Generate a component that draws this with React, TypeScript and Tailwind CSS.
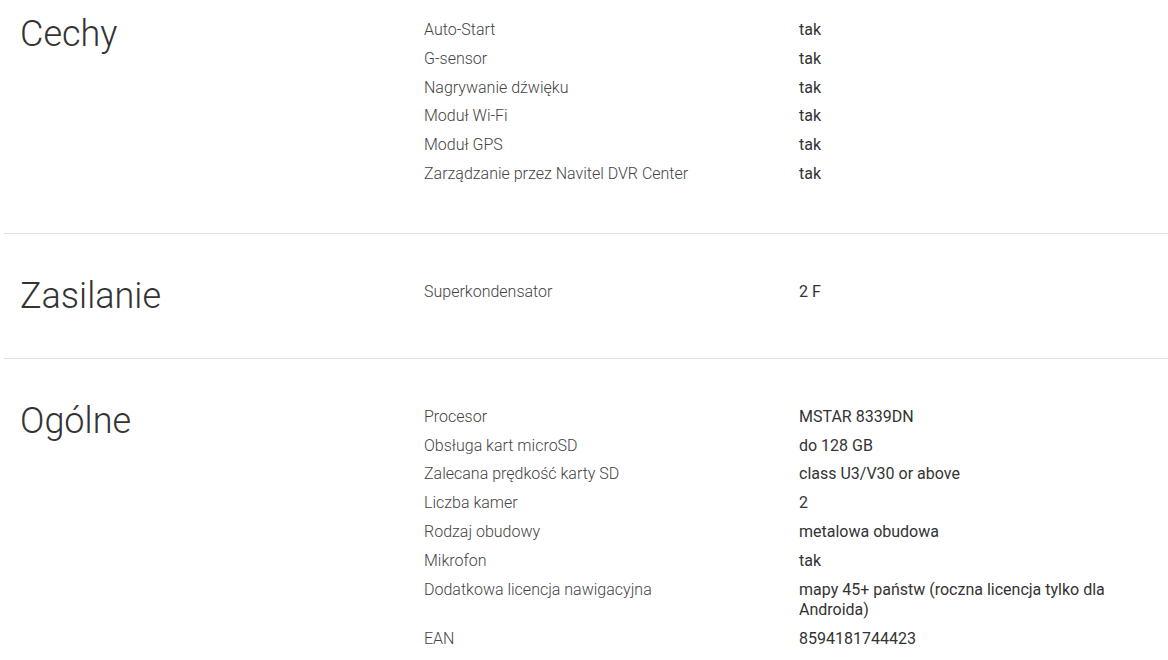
import React from "react";

const sections = [
  {
    title: "Cechy",
    rows: [
      ["Auto-Start", "tak"],
      ["G-sensor", "tak"],
      ["Nagrywanie dźwięku", "tak"],
      ["Moduł Wi-Fi", "tak"],
      ["Moduł GPS", "tak"],
      ["Zarządzanie przez Navitel DVR Center", "tak"],
    ],
  },
  {
    title: "Zasilanie",
    rows: [["Superkondensator", "2 F"]],
  },
  {
    title: "Ogólne",
    rows: [
      ["Procesor", "MSTAR 8339DN"],
      ["Obsługa kart microSD", "do 128 GB"],
      ["Zalecana prędkość karty SD", "class U3/V30 or above"],
      ["Liczba kamer", "2"],
      ["Rodzaj obudowy", "metalowa obudowa"],
      ["Mikrofon", "tak"],
      ["Dodatkowa licencja nawigacyjna", "mapy 45+ państw (roczna licencja tylko dla Androida)"],
      ["EAN", "8594181744423"],
    ],
  },
];

const App = () => {
  return (
    <div className="w-[1168px] h-[660px] overflow-hidden bg-white font-['Roboto',sans-serif]">
      <div className="ml-[4px]">
        {sections.map((section, i) => (
          <section
            key={section.title}
            className={`flex border-b border-[#e2e2e2] pb-[44px] ${i === 0 ? "pt-[16px]" : "pt-[44px]"}`}
          >
            {/* section heading */}
            <h2 className="w-[420px] shrink-0 pl-[16px] text-[36px] leading-[36px] font-light text-[#333]">
              {section.title}
            </h2>
            <div className="flex-1">
              {section.rows.map(([label, value]) => (
                <div key={label} className="flex py-1 text-[16px] leading-[20.8px]">
                  <div className="w-[375px] shrink-0 font-light text-[#444]">{label}</div>
                  <div className="w-[340px] text-[#333]">{value}</div>
                </div>
              ))}
            </div>
          </section>
        ))}
      </div>
    </div>
  );
};

export default App;
